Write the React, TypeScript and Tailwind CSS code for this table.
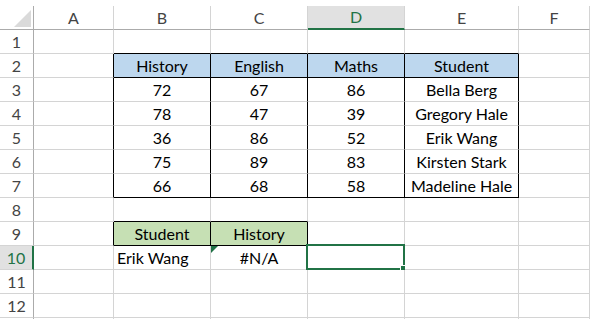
import clsx from 'clsx'

const cn = clsx

// columns after the row-number gutter
const COLS = ['A', 'B', 'C', 'D', 'E', 'F']

type Row = string[]

const CELLS: Record<number, Row> = {
  2: ['', 'History', 'English', 'Maths', 'Student', ''],
  3: ['', '72', '67', '86', 'Bella Berg', ''],
  4: ['', '78', '47', '39', 'Gregory Hale', ''],
  5: ['', '36', '86', '52', 'Erik Wang', ''],
  6: ['', '75', '89', '83', 'Kirsten Stark', ''],
  7: ['', '66', '68', '58', 'Madeline Hale', ''],
  9: ['', 'Student', 'History', '', '', ''],
  10: ['', 'Erik Wang', '#N/A', '', '', ''],
}

// row 13 only peeks in at the bottom edge, so its number is left off
const ROWS = Array.from({ length: 13 }, (_, i) => i + 1)

// black borders for the two small tables (B2:E7 and B9:C9)
function rightBlack(r: number, c: number) {
  if (r >= 2 && r <= 7) return c <= 4
  if (r === 9) return c <= 2
  return false
}

function bottomBlack(r: number, c: number) {
  if (r === 1 || r === 2 || r === 7) return c >= 1 && c <= 4
  if (r === 8 || r === 9) return c === 1 || c === 2
  return false
}

function fill(r: number, c: number) {
  if (r === 2 && c >= 1 && c <= 4) return 'bg-[#bdd7ee]'
  if (r === 9 && c >= 1 && c <= 2) return 'bg-[#c6e0b4]'
  return 'bg-white'
}

function Cell({ r, c }: { r: number; c: number }) {
  const value = CELLS[r]?.[c] ?? ''
  const leftAligned = r === 10 && c === 1
  const selected = r === 10 && c === 3
  const error = r === 10 && c === 2

  return (
    <div
      className={cn(
        'relative flex items-center border-r border-b pt-[1px] text-[16px] text-black whitespace-nowrap',
        rightBlack(r, c) ? 'border-r-black' : 'border-r-[#d4d4d4]',
        bottomBlack(r, c) ? 'border-b-black' : 'border-b-[#d4d4d4]',
        leftAligned ? 'justify-start pl-[3px]' : 'justify-center',
        fill(r, c)
      )}
    >
      {value}
      {error && (
        <svg className="absolute left-0 top-0" width="7" height="7" viewBox="0 0 7 7">
          <polygon points="0,0 7,0 0,7" fill="#1e7145" />
        </svg>
      )}
      {selected && (
        <div className="absolute -left-[2px] -top-[2px] -right-[1px] -bottom-[1px] border-2 border-[#217346]">
          <div className="absolute -right-[4px] -bottom-[4px] h-[6px] w-[6px] bg-[#217346] outline outline-1 outline-white" />
        </div>
      )}
    </div>
  )
}

export default function App() {
  return (
    <div
      className="h-[319px] w-[590px] overflow-hidden bg-white pt-[6px]"
      style={{ fontFamily: 'Lato, "Noto Sans", sans-serif' }}
    >
      <div className="grid grid-cols-[34px_80px_97px_97px_97px_114px_1fr] auto-rows-[24px]">
        {/* corner */}
        <div className="flex items-end justify-end border-r border-b border-r-[#ababab] border-b-[#ababab] pb-[2px] pr-[2px]">
          <svg width="17" height="17" viewBox="0 0 17 17">
            <polygon points="17,0 17,17 0,17" fill="#dadada" />
          </svg>
        </div>

        {/* column letters */}
        {COLS.map((col) => (
          <div
            key={col}
            className={cn(
              'flex items-center justify-center border-r border-r-[#d4d4d4] text-[16px]',
              col === 'D'
                ? 'border-b-2 border-b-[#217346] bg-[#e1e1e1] text-[#217346]'
                : 'border-b border-b-[#ababab] text-[#444]'
            )}
          >
            {col}
          </div>
        ))}

        {ROWS.map((r) => [
          <div
            key={`h${r}`}
            className={cn(
              'flex items-center justify-center border-b border-b-[#d4d4d4] pt-[1px] text-[16px]',
              r === 10
                ? 'border-r-2 border-r-[#217346] bg-[#e1e1e1] text-[#217346]'
                : 'border-r border-r-[#ababab] text-[#444]'
            )}
          >
            {r < 13 ? r : ''}
          </div>,
          ...COLS.map((_, c) => <Cell key={`${r}-${c}`} r={r} c={c} />),
        ])}
      </div>
    </div>
  )
}
